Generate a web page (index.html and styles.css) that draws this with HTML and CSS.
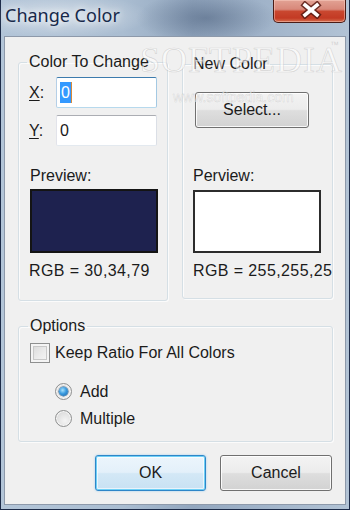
FILE: index.html
```html
<!DOCTYPE html>
<html>
<head>
<meta charset="utf-8">
<link rel="stylesheet" href="styles.css">
</head>
<body>
<div class="window">
  <div class="titlebar">
    <span class="title">Change Color</span>
    <div class="close">
      <svg width="22" height="18" viewBox="0 0 22 18">
        <g stroke="#5a1a12" stroke-width="6.5" stroke-linecap="square" opacity="0.85">
          <line x1="5" y1="4" x2="17" y2="14"/>
          <line x1="17" y1="4" x2="5" y2="14"/>
        </g>
        <g stroke="#ffffff" stroke-width="3.6" stroke-linecap="square">
          <line x1="5" y1="4" x2="17" y2="14"/>
          <line x1="17" y1="4" x2="5" y2="14"/>
        </g>
      </svg>
    </div>
  </div>
  <div class="client">
    <div class="watermark" aria-hidden="true">
      <span class="wm-big">SOFTPEDIA</span>
      <span class="wm-tm">™</span>
      <span class="wm-url">www.softpedia.com</span>
    </div>
    <div class="groups">
      <fieldset class="group group-left">
        <legend>Color To Change</legend>
        <div class="field field-x">
          <span class="field-label"><u>X</u>:</span>
          <div class="textbox focused"><span class="sel">0</span></div>
        </div>
        <div class="field field-y">
          <span class="field-label"><u>Y</u>:</span>
          <div class="textbox"><span class="val">0</span></div>
        </div>
        <div class="label preview-label">Preview:</div>
        <div class="swatch swatch-old" style="background: rgb(30,34,79)"></div>
        <div class="label rgb">RGB = 30,34,79</div>
      </fieldset>
      <fieldset class="group group-right">
        <legend>New Color</legend>
        <button class="btn btn-select">Select...</button>
        <div class="label perview-label">Perview:</div>
        <div class="swatch swatch-new" style="background: rgb(255,255,255)"></div>
        <div class="label rgb">RGB = 255,255,25</div>
      </fieldset>
    </div>
    <fieldset class="group options">
      <legend>Options</legend>
      <div class="check-row"><span class="checkbox"></span><span>Keep Ratio For All Colors</span></div>
      <div class="radios">
        <div class="radio-row first"><span class="radio checked"></span><span>Add</span></div>
        <div class="radio-row"><span class="radio"></span><span>Multiple</span></div>
      </div>
    </fieldset>
    <div class="actions">
      <button class="btn btn-ok">OK</button>
      <button class="btn btn-cancel">Cancel</button>
    </div>
  </div>
</div>
</body>
</html>
```
FILE: styles.css
```css
html, body {
  margin: 0;
  padding: 0;
}
body {
  width: 350px;
  height: 510px;
  overflow: hidden;
  font-family: "Liberation Sans", Arial, sans-serif;
  font-size: 16px;
  color: #1b1b1b;
  background: #9fb2c8;
}
.window {
  box-sizing: border-box;
  width: 350px;
  height: 510px;
  display: flex;
  flex-direction: column;
  border: 1px solid #1d2b48;
  border-top: 0;
  background:
    radial-gradient(ellipse 70px 26px at 205px 18px, rgba(60, 80, 110, 0.45), rgba(60, 80, 110, 0)),
    radial-gradient(ellipse 90px 22px at 60px 16px, rgba(255, 255, 255, 0.45), rgba(255, 255, 255, 0)),
    linear-gradient(90deg, #b3c5d8 0%, #aabdd1 35%, #93a7bf 55%, #a0b3c9 75%, #b2c3d5 100%);
}
.titlebar {
  height: 36px;
  flex: none;
  display: flex;
  justify-content: space-between;
  align-items: flex-start;
  padding: 0 3px 0 4px;
}
.title {
  font-family: "Noto Sans", "Open Sans", sans-serif;
  font-size: 18px;
  line-height: 20px;
  margin-top: 5px;
  color: #17294a;
  text-shadow: 0 0 6px rgba(255, 255, 255, 0.9), 0 0 12px rgba(255, 255, 255, 0.7);
}
.close {
  box-sizing: border-box;
  width: 73px;
  height: 23px;
  border: 1px solid #4b1c16;
  border-top: 0;
  border-radius: 0 0 5px 5px;
  background: linear-gradient(#e2a294 0%, #d8887a 42%, #c9472f 52%, #c33a24 82%, #d56f4e 100%);
  box-shadow: inset 0 0 0 1px rgba(255, 215, 205, 0.45);
  display: flex;
  align-items: center;
  justify-content: center;
  padding: 0 0 3px 3px;
}
.client {
  flex: 1;
  position: relative;
  box-sizing: border-box;
  margin: 0 3px 4px;
  border: 1px solid #8d99aa;
  background: #f0f0f0;
  padding: 16px 12px 0 13px;
  display: flex;
  flex-direction: column;
}
.watermark {
  position: absolute;
  inset: 0;
  pointer-events: none;
  z-index: 2;
}
.wm-big {
  position: absolute;
  left: 135px;
  top: 5px;
  font-family: "Liberation Serif", serif;
  font-size: 36px;
  line-height: 36px;
  letter-spacing: 1px;
  color: rgba(255, 255, 255, 0.6);
  -webkit-text-stroke: 0.7px rgba(140, 140, 140, 0.3);
}
.wm-tm {
  position: absolute;
  left: 325px;
  top: 3px;
  font-size: 9px;
  line-height: 10px;
  color: rgba(150, 150, 150, 0.35);
}
.wm-url {
  position: absolute;
  left: 168px;
  top: 52px;
  font-size: 14px;
  line-height: 16px;
  color: rgba(255, 255, 255, 0.65);
  -webkit-text-stroke: 0.5px rgba(140, 140, 140, 0.3);
}
.groups {
  display: flex;
  gap: 14px;
  align-items: flex-start;
}
.group {
  margin: 0;
  min-width: 0;
  box-sizing: border-box;
  border: 1px solid #d5dfe5;
  border-radius: 3px;
  box-shadow: inset 1px 1px 0 #fbfbfb, 1px 1px 0 #fbfbfb;
}
.group legend {
  padding: 0 2px;
  margin-left: -2px;
  font-size: 16px;
  line-height: 18px;
  color: #1b1b1b;
}
.group-left {
  width: 150px;
  padding: 0 10px 20px;
  display: flex;
  flex-direction: column;
}
.group-right {
  width: 151px;
  margin-top: 2px;
  padding: 0 10px 18px;
  display: flex;
  flex-direction: column;
  align-items: flex-start;
}
.field {
  display: flex;
  align-items: center;
  height: 31px;
}
.field-x { margin-top: 6px; }
.field-y { margin-top: 7px; }
.field-label {
  width: 27px;
  line-height: 18px;
}
.field-label u {
  text-decoration-thickness: 1px;
  text-underline-offset: 2px;
}
.textbox {
  box-sizing: border-box;
  width: 101px;
  height: 31px;
  background: #fff;
  border: 1px solid;
  border-color: #abadb3 #dbdfe6 #e3e9ef #e2e3ea;
  border-radius: 2px;
  display: flex;
  align-items: center;
  padding-left: 3px;
}
.textbox.focused {
  border-color: #3d7bad #a4c9e3 #b7d9ed #b5cfe7;
}
.sel {
  background: #3399ff;
  color: #fff;
  line-height: 21px;
  padding: 0 1px;
  box-shadow: 1px 0 0 #d88a3a;
}
.val {
  line-height: 18px;
}
.label {
  line-height: 18px;
  white-space: nowrap;
}
.preview-label {
  margin-top: 21px;
  padding-left: 1px;
}
.perview-label {
  margin-top: 39px;
}
.swatch {
  box-sizing: border-box;
  width: 128px;
  height: 64px;
  border: 2px solid #2c2c2c;
}
.swatch-old {
  margin-top: 4px;
  margin-left: 1px;
  border-color: #141414;
}
.swatch-new {
  margin-top: 5px;
  height: 63px;
}
.rgb {
  margin-top: 9px;
  letter-spacing: 0.4px;
}
.btn {
  box-sizing: border-box;
  font-family: "Liberation Sans", Arial, sans-serif;
  font-size: 16px;
  color: #1b1b1b;
  height: 36px;
  padding: 0;
  border: 1px solid #707070;
  border-radius: 3px;
  background: linear-gradient(#f3f3f3 0%, #ececec 48%, #dedede 52%, #d2d2d2 100%);
  box-shadow: inset 0 0 0 1px rgba(255, 255, 255, 0.85);
}
.btn-select {
  margin-top: 19px;
  margin-left: 2px;
  width: 114px;
}
.options {
  margin-top: 16px;
  padding: 0 10px 14px 11px;
  display: flex;
  flex-direction: column;
}
.check-row {
  margin-top: 8px;
  height: 20px;
  display: flex;
  align-items: center;
  line-height: 18px;
}
.checkbox {
  box-sizing: border-box;
  width: 20px;
  height: 20px;
  margin-right: 5px;
  border: 1px solid #8e8f8f;
  background: linear-gradient(135deg, #d6d6d6 0%, #ebebeb 55%, #f8f8f8 100%);
  box-shadow: inset 0 0 0 2px #f4f4f4, inset 0 0 0 3px #c8c8c8;
}
.radios {
  margin-left: 25px;
  display: flex;
  flex-direction: column;
}
.radio-row {
  height: 17px;
  margin-top: 10px;
  display: flex;
  align-items: center;
  line-height: 18px;
}
.radio-row.first {
  margin-top: 20px;
}
.radio {
  box-sizing: border-box;
  width: 17px;
  height: 17px;
  margin-right: 8px;
  border-radius: 50%;
  border: 1px solid #8e8f8f;
  background: radial-gradient(circle at 60% 65%, #f4f4f4 0%, #e2e2e2 55%, #cfcfcf 100%);
  box-shadow: inset 0 0 0 1px #f6f6f6;
  position: relative;
}
.radio.checked::after {
  content: "";
  position: absolute;
  left: 3px;
  top: 3px;
  width: 9px;
  height: 9px;
  border-radius: 50%;
  background: radial-gradient(circle at 40% 35%, #a9e2fb 0%, #3a9be0 45%, #1a5f9e 100%);
  box-shadow: 0 0 0 0.5px #245a8a;
}
.actions {
  margin-top: 13px;
  display: flex;
  justify-content: flex-end;
  gap: 14px;
  padding-right: 1px;
}
.btn-ok {
  width: 111px;
  border-color: #2e86c8;
  background: linear-gradient(#ecf5fc 0%, #e3f0fa 48%, #d3e8f6 52%, #c8e1f3 100%);
  box-shadow: inset 0 0 0 1px #6fd0f6, inset 0 0 0 2px rgba(255, 255, 255, 0.6), 0 0 2px rgba(80, 180, 240, 0.6);
}
.btn-cancel {
  width: 112px;
}
```
